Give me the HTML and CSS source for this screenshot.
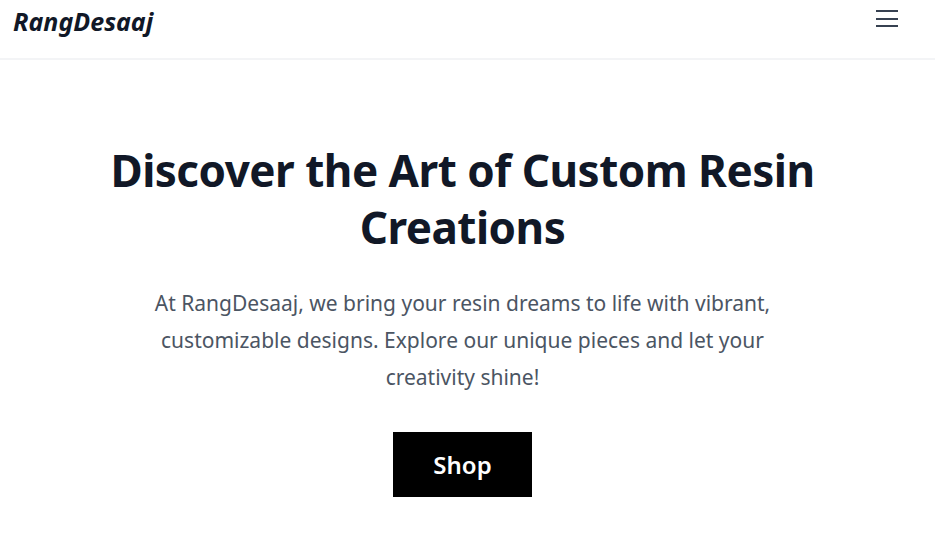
FILE: index.html
```html
<!DOCTYPE html>
<html lang="en">
<head>
    <meta charset="UTF-8">
    <meta name="viewport" content="width=device-width, initial-scale=1.0">
    <title>RangDesaaj</title>
    <link rel="stylesheet" href="styles.css">
</head>
<body>
    <header class="navbar">
        <a href="#" class="logo">RangDesaaj</a>
        <button class="menu-btn" aria-label="Menu">
            <svg width="24" height="24" viewBox="0 0 24 24" fill="none" stroke="#374151" stroke-width="2" stroke-linecap="butt">
                <path d="M1 3h22M1 11h22M1 18h22"/>
            </svg>
        </button>
    </header>

    <section class="hero">
        <h1>Discover the Art of Custom Resin Creations</h1>
        <p>At RangDesaaj, we bring your resin dreams to life with vibrant, customizable designs. Explore our unique pieces and let your creativity shine!</p>
        <a href="#" class="shop-btn">Shop</a>
    </section>
</body>
</html>
```

FILE: styles.css
```css
* {
    box-sizing: border-box;
}
body {
    margin: 0;
    font-family: "Noto Sans", "Open Sans", sans-serif;
    background-color: #fff;
    color: #111827;
}
.navbar {
    height: 60px;
    display: flex;
    align-items: flex-start;
    justify-content: space-between;
    padding: 4px 36px 0 13px;
    border-bottom: 2px solid #f3f4f6;
}
.logo {
    font-size: 25px;
    font-weight: 700;
    font-style: italic;
    color: #111827;
    text-decoration: none;
    line-height: 34px;
}
.menu-btn {
    background: none;
    border: none;
    padding: 0;
    margin-top: 4px;
    cursor: pointer;
}
.hero {
    display: flex;
    flex-direction: column;
    align-items: center;
    text-align: center;
    padding: 82px 25px 0 15px;
}
.hero h1 {
    margin: 0;
    max-width: 730px;
    font-size: 44px;
    font-weight: 700;
    letter-spacing: -0.5px;
    line-height: 57px;
    color: #111827;
}
.hero p {
    margin: 29px 0 0;
    max-width: 640px;
    font-size: 21px;
    line-height: 37px;
    color: #4b5563;
}
.shop-btn {
    margin-top: 36px;
    display: inline-block;
    background-color: #000;
    color: #fff;
    text-decoration: none;
    font-size: 24px;
    font-weight: 600;
    padding: 0 40px;
    line-height: 65px;
}
```
